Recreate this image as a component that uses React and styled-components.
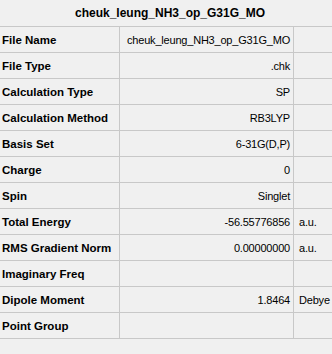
import React from 'react';
import styled, { createGlobalStyle } from 'styled-components';

const GlobalStyle = createGlobalStyle`
    html, body {
        margin: 0;
        padding: 0;
        background: #f0f0f0;
    }
    body {
        font-family: "Liberation Sans", Arial, sans-serif;
        color: #000;
    }
`;

const Panel = styled.div`
    width: 332px;
    height: 354px;
    background: #f0f0f0;
    overflow: hidden;
`;

const Title = styled.div`
    height: 26px;
    display: flex;
    align-items: center;
    justify-content: center;
    padding-left: 8px;
    font-weight: bold;
    font-size: 12px;
`;

const Table = styled.div`
    display: grid;
    grid-template-columns: 120px 174px 1fr;
    border-top: 1px solid #c8c8c8;
`;

const Cell = styled.div`
    height: 25px;
    display: flex;
    align-items: center;
    border-bottom: 1px solid #c8c8c8;
    border-right: ${({ last }) => (last ? 'none' : '1px solid #c8c8c8')};
    font-size: 11px;
    letter-spacing: -0.2px;
    white-space: nowrap;
    overflow: hidden;
`;

const Label = styled(Cell)`
    font-weight: bold;
    padding-left: 2px;
    font-size: 11.5px;
    letter-spacing: 0;
`;

const Value = styled(Cell)`
    justify-content: flex-end;
    padding-right: 3px;
`;

const Unit = styled(Cell)`
    padding-left: 5px;
`;

const props = [
    ['File Name', 'cheuk_leung_NH3_op_G31G_MO', ''],
    ['File Type', '.chk', ''],
    ['Calculation Type', 'SP', ''],
    ['Calculation Method', 'RB3LYP', ''],
    ['Basis Set', '6-31G(D,P)', ''],
    ['Charge', '0', ''],
    ['Spin', 'Singlet', ''],
    ['Total Energy', '-56.55776856', 'a.u.'],
    ['RMS Gradient Norm', '0.00000000', 'a.u.'],
    ['Imaginary Freq', '', ''],
    ['Dipole Moment', '1.8464', 'Debye'],
    ['Point Group', '', ''],
];

export default function App() {
    return (
        <>
            <GlobalStyle />
            <Panel>
                <Title>cheuk_leung_NH3_op_G31G_MO</Title>
                <Table>
                    {props.map(([name, value, unit]) => (
                        <React.Fragment key={name}>
                            <Label>{name}</Label>
                            <Value>{value}</Value>
                            <Unit last>{unit}</Unit>
                        </React.Fragment>
                    ))}
                </Table>
            </Panel>
        </>
    );
}
